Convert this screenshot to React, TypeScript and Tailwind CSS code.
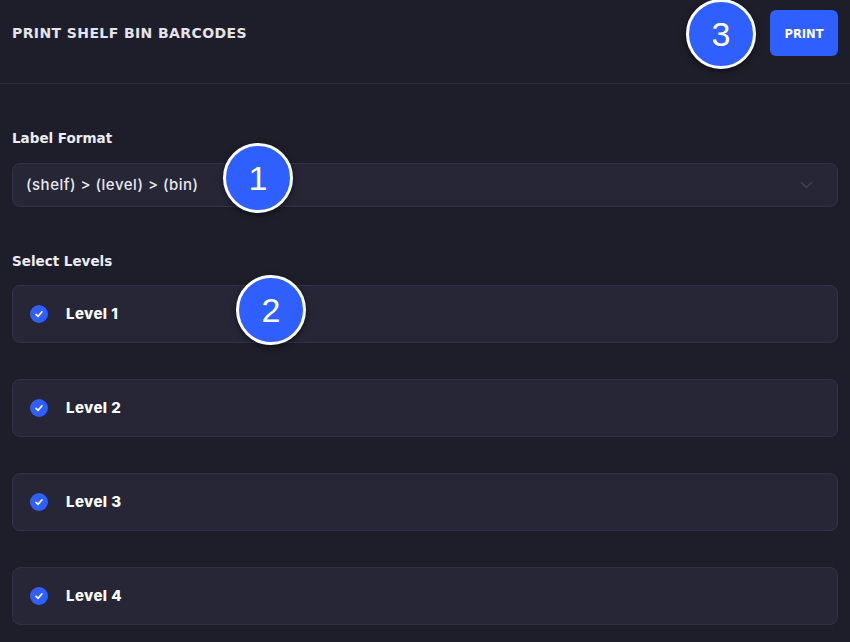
const levels = ["Level 1", "Level 2", "Level 3", "Level 4"];

const wide = { fontFamily: "'DejaVu Sans', Verdana, sans-serif" };

function Badge({ n, className }: { n: number; className: string }) {
  return (
    <div
      className={
        "absolute flex h-[70px] w-[70px] items-center justify-center rounded-full border-[3px] border-white bg-[#2f5fff] text-[34px] text-white shadow-[0_2px_6px_rgba(0,0,0,0.5)] " +
        className
      }
      style={{ fontFamily: "'Liberation Sans', Arial, sans-serif" }}
    >
      {n}
    </div>
  );
}

function Check() {
  return (
    <span className="flex h-[18px] w-[18px] items-center justify-center rounded-full bg-[#2f5fff]">
      <svg width="10" height="10" viewBox="0 0 10 10" fill="none">
        <path d="M2 5.3 4.1 7.3 8 2.8" stroke="white" strokeWidth="1.7" strokeLinecap="round" strokeLinejoin="round" />
      </svg>
    </span>
  );
}

export default function App() {
  return (
    <div
      className="relative min-h-[642px] w-full overflow-hidden bg-[#1e1e2b] text-[#ececf1]"
      style={{ fontFamily: "Inter, 'Open Sans', sans-serif" }}
    >
      <header className="h-[84px] border-b border-[#2d2d3d] px-3 pt-[10px]">
        <div className="flex h-[46px] items-center justify-between">
          <h1 className="pt-px text-[14px] font-bold tracking-[0.4px] text-[#e4e4ea]" style={wide}>
            PRINT SHELF BIN BARCODES
          </h1>
          <button
            className="h-[46px] w-[68px] rounded-[6px] bg-[#2f5fff] pt-[3px] text-[11.5px] font-bold text-white"
            style={wide}
          >
            PRINT
          </button>
        </div>
      </header>

      <main className="px-3 pt-[46px]">
        <p className="text-[13.5px] font-bold leading-[16px]" style={wide}>
          Label Format
        </p>
        <div className="mt-[17px] flex h-[44px] items-center justify-between rounded-[8px] border border-[#31314a] bg-[#262636] pl-[13px] pr-[24px]">
          <span className="text-[15px] font-medium tracking-[0.5px] text-[#e6e6ee]">(shelf) &gt; (level) &gt; (bin)</span>
          <svg width="13" height="8" viewBox="0 0 13 8" fill="none">
            <path d="M1 1.2 6.5 6.5 12 1.2" stroke="#3e3e58" strokeWidth="1.6" />
          </svg>
        </div>

        <p className="mt-[46px] text-[13.5px] font-bold leading-[16px]" style={wide}>
          Select Levels
        </p>
        <div className="mt-[16px] flex flex-col gap-[36px]">
          {levels.map((l) => (
            <div
              key={l}
              className="flex h-[58px] items-center gap-[18px] rounded-[8px] border border-[#31314a] bg-[#262636] pl-[17px]"
            >
              <Check />
              <span className="text-[15px] font-extrabold tracking-[0.4px] text-white">{l}</span>
            </div>
          ))}
        </div>
      </main>

      <Badge n={1} className="left-[223px] top-[143px]" />
      <Badge n={2} className="left-[236px] top-[275px]" />
      <Badge n={3} className="left-[686px] top-[-1px]" />
    </div>
  );
}
